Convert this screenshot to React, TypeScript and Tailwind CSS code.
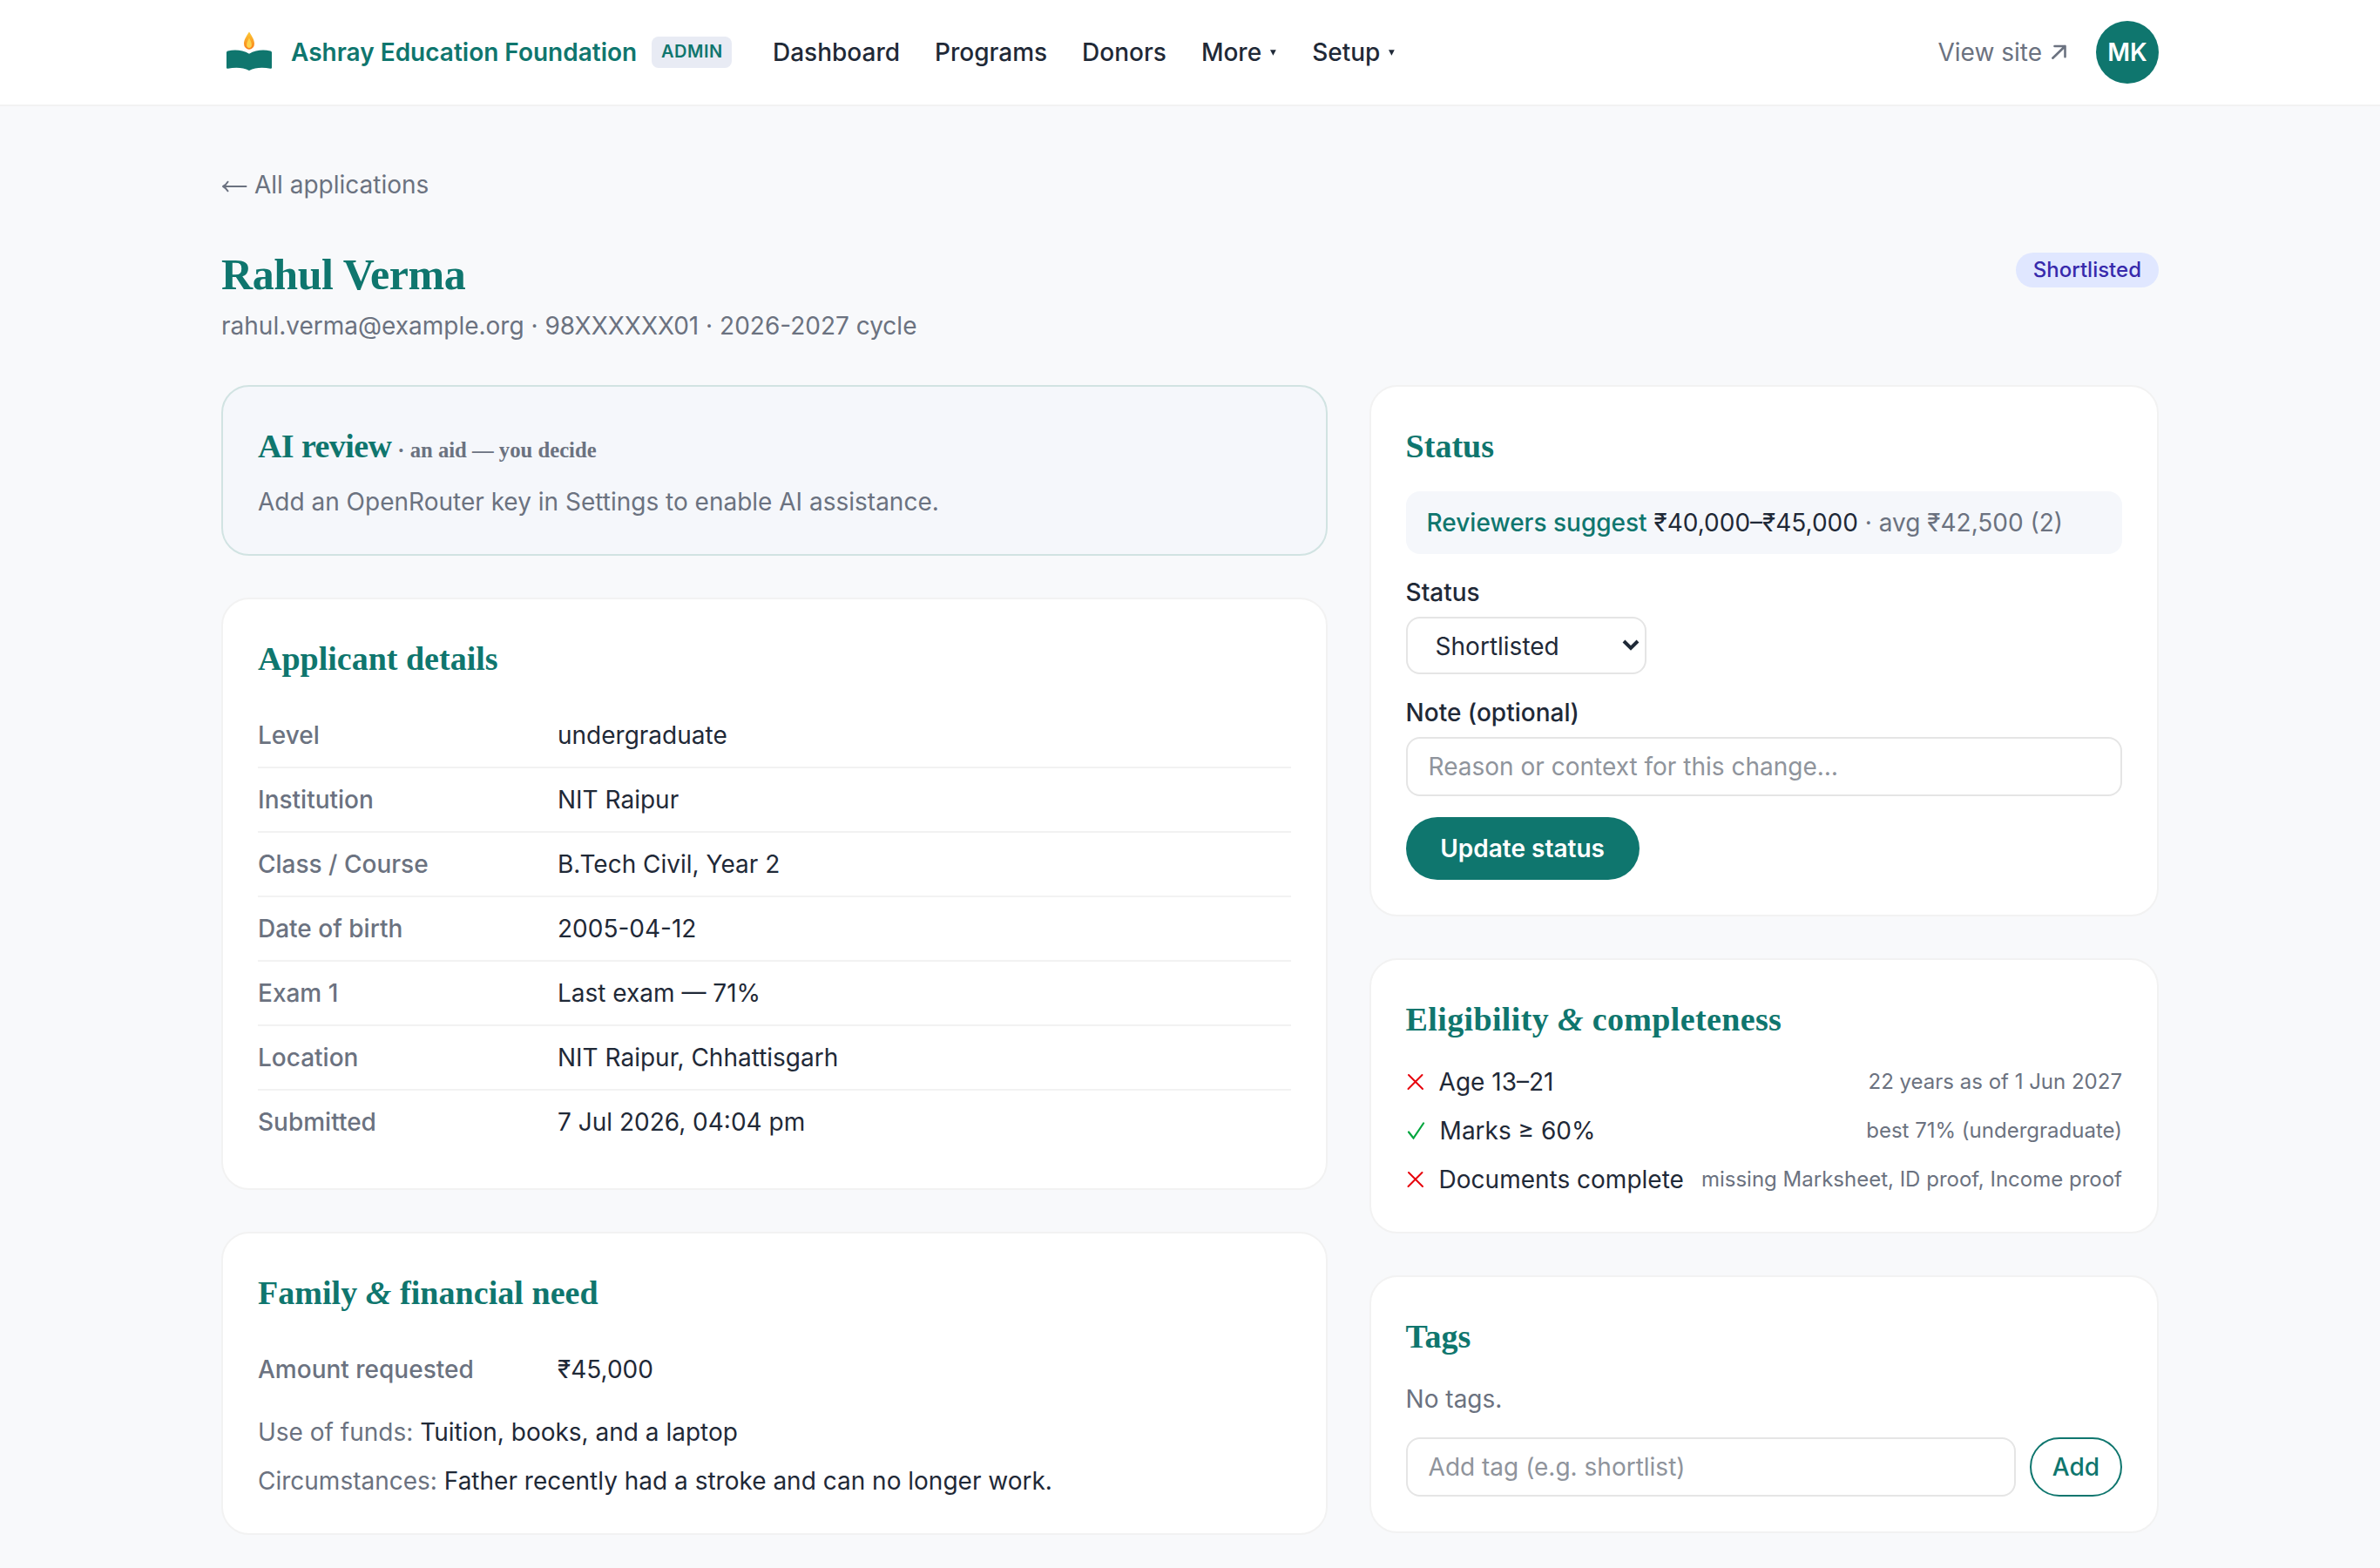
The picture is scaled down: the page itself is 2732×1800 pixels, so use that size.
import type { ReactNode } from "react";

const heading = "h-14 font-['Liberation_Serif',serif] text-[38px] font-bold leading-[57px] whitespace-nowrap text-[#0f766e]";

function Card({ children, tone = "border-[#f2f2f2] bg-white" }: { children: ReactNode; tone?: string }) {
  return <section className={`rounded-[32px] border-2 p-10 ${tone}`}>{children}</section>;
}

function Logo() {
  return (
    <svg className="size-16" viewBox="0 0 64 64">
      <defs>
        <linearGradient id="flame" x1="0" y1="0" x2="0" y2="1">
          <stop offset="0" stopColor="#fcc934" />
          <stop offset="1" stopColor="#f97f1b" />
        </linearGradient>
      </defs>
      <path d="M32 8.500c3 5 6 9 6 13.700a6 6.600 0 0 1-12 0c0-4.700 3-8.700 6-13.700z" fill="url(#flame)" />
      <path d="M32 15.500c1.500 3 2.900 5.500 2.900 8a2.900 3.500 0 0 1-5.800 0c0-2.500 1.400-5 2.900-8z" fill="#fcd34d" />
      <path d="M6 32.300c0-1 .6-1.600 1.600-1.900 8-1.600 17-1.200 24.400 3.400 7.400-4.600 16.400-5 24.400-3.400 1 .3 1.600.9 1.600 1.900v17.100c0 .9-.6 1.400-1.600 1.300-8.500-1.600-17.500-1.400-24.400 2.200-6.900-3.600-15.900-3.800-24.400-2.200-1 .1-1.600-.4-1.600-1.300z" fill="#0f766e" />
    </svg>
  );
}

function Caret() {
  return (
    <svg className="h-[7px] w-2" viewBox="0 0 8 7">
      <path d="M0 .3h6.800L3.400 6.700z" fill="currentColor" />
    </svg>
  );
}

function Header() {
  return (
    <header className="h-[122px] border-b-2 border-[#f2f2f2] bg-white">
      <div className="mx-auto flex h-[120px] w-[2224px] items-center">
        <Logo />
        <span className="ml-4 w-[398px] whitespace-nowrap font-semibold text-[#0f766e]">Ashray Education Foundation</span>
        <span className="ml-4 flex h-9 w-[92px] items-center rounded-[8px] bg-[#e8ebf4] pl-[11px] pb-0.5 text-[20px] font-semibold tracking-[0.5px] text-[#0f766e]">ADMIN</span>
        <nav className="ml-[47px] flex items-center gap-10 font-medium text-[#1f2937]">
          <span>Dashboard</span>
          <span>Programs</span>
          <span>Donors</span>
          <span className="flex items-center gap-2.5">More <Caret /></span>
          <span className="flex items-center gap-2.5">Setup <Caret /></span>
        </nav>
        <div className="ml-auto flex items-center text-[#6b7280]">
          <span>View site</span>
          <svg className="ml-2.5 h-[18px] w-5" viewBox="0 0 20 18" fill="none" stroke="currentColor" strokeWidth="2.6" strokeLinecap="round" strokeLinejoin="round">
            <path d="M2.300 15.700L16.500 2M4.500 2h12v12.200" />
          </svg>
          <span className="ml-8 flex size-[72px] items-center justify-center rounded-full bg-[#0f766e] font-semibold text-white">MK</span>
        </div>
      </div>
    </header>
  );
}

const details = [
  ["Level", "undergraduate"],
  ["Institution", "NIT Raipur"],
  ["Class / Course", "B.Tech Civil, Year 2"],
  ["Date of birth", "2005-04-12"],
  ["Exam 1", "Last exam — 71%"],
  ["Location", "NIT Raipur, Chhattisgarh"],
  ["Submitted", "7 Jul 2026, 04:04 pm"],
];

function Row({ label, value }: { label: string; value: string }) {
  return (
    <div className="flex gap-6 border-b-2 border-[#f2f2f2] py-4 last:border-b-0">
      <dt className="w-80 shrink-0 font-medium text-[#6b7280]">{label}</dt>
      <dd>{value}</dd>
    </div>
  );
}

function Cross() {
  return (
    <svg className="h-5 w-[22px]" viewBox="0 0 22 20" fill="none" stroke="#e7000b" strokeWidth="2" strokeLinecap="round">
      <path d="M3 2l16 16M18.500 2l-16 16" />
    </svg>
  );
}

function Check() {
  return (
    <svg className="mr-px h-5 w-[22px]" viewBox="0 0 22 20" fill="none" stroke="#00a63e" strokeWidth="2.200" strokeLinecap="round">
      <path d="M3 11.500l5.500 7L20 1.500" />
    </svg>
  );
}

const checks = [
  { ok: false, label: "Age 13–21", note: "22 years as of 1 Jun 2027" },
  { ok: true, label: "Marks ≥ 60%", note: "best 71% (undergraduate)" },
  { ok: false, label: "Documents complete", note: "missing Marksheet, ID proof, Income proof" },
];

export default function App() {
  return (
    <div className="min-h-[1800px] w-[2732px] bg-[#f8f9fb] font-[Inter,sans-serif] text-[28px] leading-10 text-[#1f2937]">
      <Header />
      <main className="mx-auto w-[2224px] pt-[70px]">
        <a className="flex items-center gap-2 text-[#6b7280]">
          <svg className="mt-1 h-3.5 w-[30px]" viewBox="0 0 30 14" fill="none" stroke="currentColor" strokeWidth="2" strokeLinecap="round" strokeLinejoin="round">
            <path d="M28.500 7H2M7.500 1.700C6 4.200 4.200 6 2 7c2.200 1 4 2.800 5.500 5.300" />
          </svg>
          All applications
        </a>
        <div className="mt-[50px] flex h-[112px] items-start justify-between">
          <div>
            <h1 className="h-[72px] whitespace-nowrap font-['Liberation_Serif',serif] text-[50px] font-bold leading-[67px] tracking-[-0.4px] text-[#0f766e]">Rahul Verma</h1>
            <p className="text-[#6b7280]">rahul.verma@example.org · 98XXXXXX01 · 2026-2027 cycle</p>
          </div>
          <span className="mt-2 flex h-10 items-center rounded-full bg-[#e0e7ff] px-5 text-[24px] font-medium text-[#372aac]">Shortlisted</span>
        </div>

        <div className="mt-12 grid grid-cols-[1269.6px_906.4px] items-start gap-12">
          <div className="flex flex-col gap-12">
            <Card tone="border-[#d1e3e2] bg-[#f5f7fb]">
              <h2 className={heading}>
                <span className="tracking-[-0.6px]">AI review</span>
                <span className="ml-[7px] text-[24.7px] text-[#6b7280]">· an aid — you decide</span>
              </h2>
              <p className="mt-4 text-[#6b7280]">Add an OpenRouter key in Settings to enable AI assistance.</p>
            </Card>

            <Card>
              <h2 className={heading}>Applicant details</h2>
              <dl className="mt-6">
                {details.map(([label, value]) => (
                  <Row key={label} label={label} value={value} />
                ))}
              </dl>
            </Card>

            <Card>
              <h2 className={`${heading} tracking-[0.05px]`}>Family <span className="italic">&amp;</span> financial need</h2>
              <dl className="mt-6">
                <Row label="Amount requested" value="₹45,000" />
              </dl>
              <p className="mt-4"><span className="text-[#6b7280]">Use of funds:</span> Tuition, books, and a laptop</p>
              <p className="mt-4"><span className="text-[#6b7280]">Circumstances:</span> Father recently had a stroke and can no longer work.</p>
            </Card>
          </div>

          <div className="flex flex-col gap-12">
            <Card>
              <h2 className={heading}>Status</h2>
              <div className="mt-6 rounded-[16px] bg-[#f5f7fb] px-6 py-4">
                <span className="font-medium text-[#0f766e]">Reviewers suggest</span> ₹40,000–₹45,000 <span className="text-[#6b7280]">· avg ₹42,500 (2)</span>
              </div>
              <div className="mt-6 font-medium">Status</div>
              <div className="mt-2 flex h-[66px] w-[276px] items-center justify-between rounded-[16px] border-2 border-[#e5e5e5] bg-white pl-8 pr-1.5">
                <span className="pt-0.5">Shortlisted</span>
                <svg className="h-3.5 w-5" viewBox="0 0 20 14" fill="none" stroke="currentColor" strokeWidth="4">
                  <path d="M2 2l8 8 8-8" />
                </svg>
              </div>
              <div className="mt-6 font-medium">Note (optional)</div>
              <div className="mt-2 flex h-[68px] items-center rounded-[16px] border-2 border-[#e5e5e5] bg-white px-6 text-[#8f949c]">Reason or context for this change…</div>
              <button className="mt-6 flex h-[72px] w-[268px] items-center justify-center rounded-full bg-[#0f766e] font-semibold text-white">Update status</button>
            </Card>

            <Card>
              <h2 className={`${heading} tracking-[0.36px]`}>Eligibility <span className="italic">&amp;</span> completeness</h2>
              <ul className="mt-6 flex flex-col gap-4">
                {checks.map((c) => (
                  <li key={c.label} className="flex h-10 items-center whitespace-nowrap">
                    {c.ok ? <Check /> : <Cross />}
                    <span className="ml-4">{c.label}</span>
                    <span className="ml-auto text-[24px] text-[#6b7280]">{c.note}</span>
                  </li>
                ))}
              </ul>
            </Card>

            <Card>
              <h2 className={heading}>Tags</h2>
              <p className="mt-6 text-[#6b7280]">No tags.</p>
              <div className="mt-6 flex gap-4">
                <div className="flex h-[68px] flex-1 items-center rounded-[16px] border-2 border-[#e5e5e5] bg-white px-6 text-[#8f949c]">Add tag (e.g. shortlist)</div>
                <button className="flex h-[68px] w-[106px] items-center justify-center rounded-full border-2 border-[#0f766e] font-medium text-[#0f766e]">Add</button>
              </div>
            </Card>
          </div>
        </div>
      </main>
    </div>
  );
}
